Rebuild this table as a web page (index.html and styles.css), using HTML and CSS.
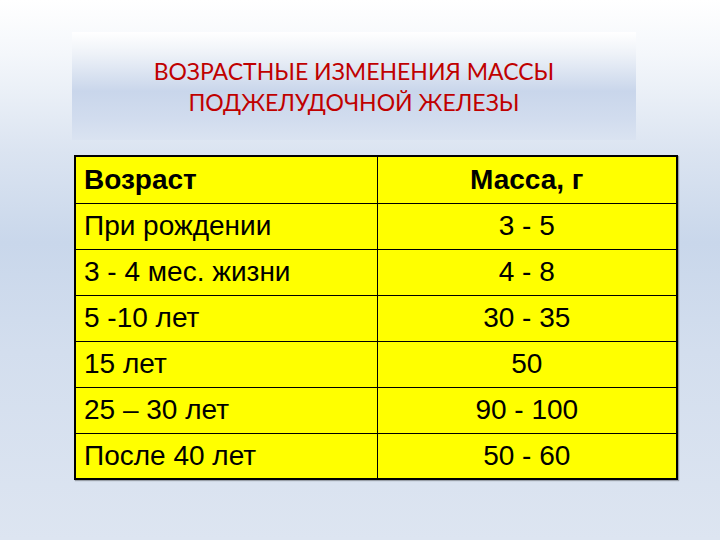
FILE: index.html
```html
<!DOCTYPE html>
<html lang="ru">
<head>
<meta charset="utf-8">
<link rel="stylesheet" href="styles.css">
</head>
<body>
<div class="slide">
  <div class="title-box">
    <h1 class="title">ВОЗРАСТНЫЕ ИЗМЕНЕНИЯ МАССЫ<br>ПОДЖЕЛУДОЧНОЙ ЖЕЛЕЗЫ</h1>
  </div>
  <table class="data">
    <tr class="head"><td class="age">Возраст</td><td class="mass">Масса, г</td></tr>
    <tr><td class="age">При рождении</td><td class="mass">3 - 5</td></tr>
    <tr><td class="age">3 - 4 мес. жизни</td><td class="mass">4 - 8</td></tr>
    <tr><td class="age">5 -10 лет</td><td class="mass">30 - 35</td></tr>
    <tr><td class="age">15 лет</td><td class="mass">50</td></tr>
    <tr><td class="age">25 – 30 лет</td><td class="mass">90 - 100</td></tr>
    <tr><td class="age">После 40 лет</td><td class="mass">50 - 60</td></tr>
  </table>
</div>
</body>
</html>
```
FILE: styles.css
```css
html, body {
  margin: 0;
  padding: 0;
}
body {
  width: 720px;
  height: 540px;
  overflow: hidden;
  background: linear-gradient(to bottom, #ffffff 0%, #f4f7fb 10%, #dbe4f1 28%, #c9d7eb 45%, #d3deee 65%, #dde5f1 100%);
}
.slide {
  width: 720px;
  height: 540px;
  padding-top: 32px;
  box-sizing: border-box;
}
.title-box {
  margin-left: 72px;
  width: 564px;
  height: 108px;
  background: linear-gradient(to bottom, #ffffff 0%, #eef2f8 20%, #c9d6eb 55%, #d1dcee 80%, #dae3f1 100%);
  display: flex;
  align-items: center;
  justify-content: center;
}
.title {
  margin: 0;
  padding-top: 2px;
  font-family: "Lato", "Open Sans", sans-serif;
  font-weight: 400;
  font-size: 23px;
  line-height: 31px;
  color: #c00000;
  text-align: center;
}
.data {
  margin-top: 15px;
  margin-left: 74px;
  width: 604px;
  border-collapse: collapse;
  border: 2px solid #000;
  background: #ffff00;
  font-family: "Liberation Sans", Arial, sans-serif;
  font-size: 28px;
  color: #000;
  box-shadow: 1px 1px 1px rgba(0,0,0,0.3);
}
.data td {
  height: 46px;
  padding: 0 0 0 8px;
  border: 1px solid #000;
  box-sizing: border-box;
  line-height: 1;
}
.data td.age {
  width: 302px;
}
.data td.mass {
  text-align: center;
  padding-left: 0;
}
.data tr.head td {
  font-weight: bold;
  height: 47px;
}
```
